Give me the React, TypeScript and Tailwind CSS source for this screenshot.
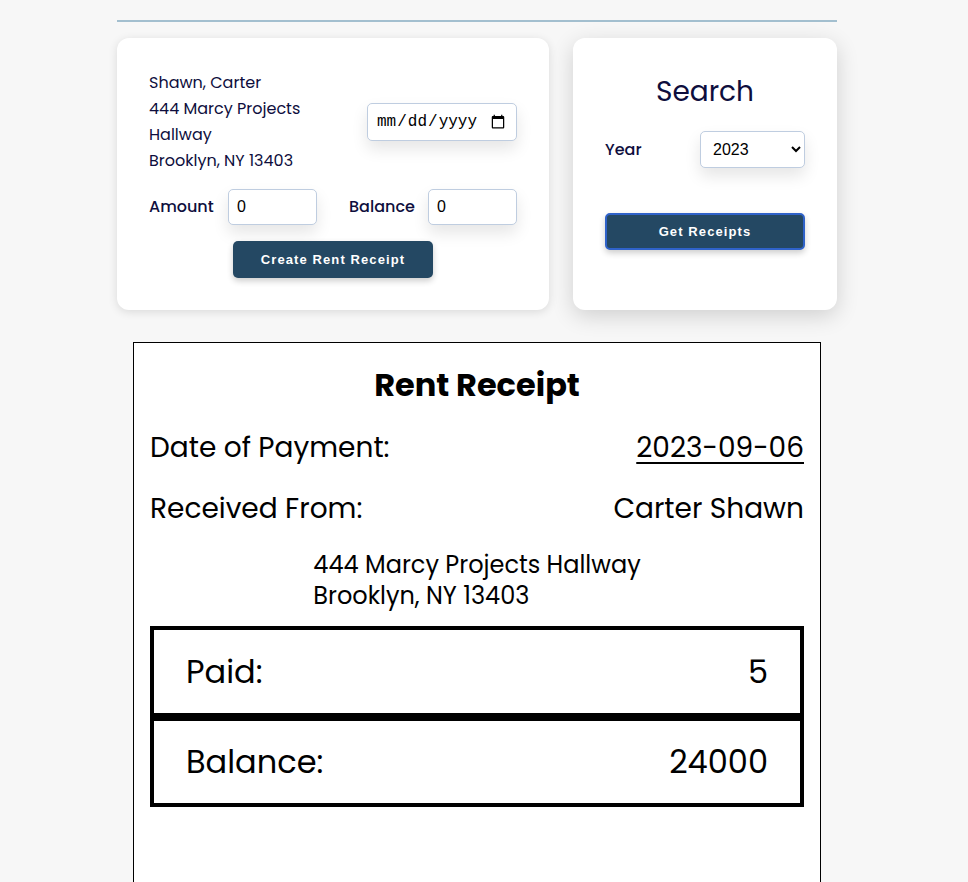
import React from "react";

const navy = "text-[#0e0e3d]";

export default function App() {
  return (
    <div className="min-h-[882px] bg-[#f7f7f7] font-['Poppins','Inter',sans-serif]">
      <div className="ml-[117px] w-[720px] pt-[20px]">
        <div className="h-[2px] bg-[#a3bfcf]" />
        <div className="mt-[16px] flex gap-6">
          <div className="w-[432px] rounded-xl bg-white p-8 shadow-[0_2px_10px_rgba(0,0,0,0.12)]">
            <div className="flex items-center justify-between">
              <div className={`text-[16px] leading-[26px] ${navy}`}>
                <div>Shawn, Carter</div>
                <div>444 Marcy Projects</div>
                <div>Hallway</div>
                <div>Brooklyn, NY 13403</div>
              </div>
              <input
                type="date"
                className="h-[38px] w-[150px] rounded-[5px] border border-[#bfcde0] bg-white px-2 font-['Liberation_Mono',monospace] text-[16px] text-black shadow-[0_8px_16px_rgba(0,0,0,0.1)]"
              />
            </div>
            <div className="mt-[15px] grid grid-cols-2 gap-8">
              <div className="flex items-center">
                <label className={`flex-1 text-[16px] font-medium ${navy}`}>Amount</label>
                <input
                  defaultValue="0"
                  className="h-[36px] w-[89px] rounded-[5px] border border-[#bfcde0] bg-white px-2 font-['Liberation_Sans',Arial,sans-serif] text-[16px] text-black shadow-[0_8px_16px_rgba(0,0,0,0.1)]"
                />
              </div>
              <div className="flex items-center">
                <label className={`flex-1 text-[16px] font-medium ${navy}`}>Balance</label>
                <input
                  defaultValue="0"
                  className="h-[36px] w-[89px] rounded-[5px] border border-[#bfcde0] bg-white px-2 font-['Liberation_Sans',Arial,sans-serif] text-[16px] text-black shadow-[0_8px_16px_rgba(0,0,0,0.1)]"
                />
              </div>
            </div>
            <div className="mt-4 flex justify-center">
              <button className="h-[37px] w-[200px] rounded-[5px] bg-[#244863] font-['Liberation_Sans',Arial,sans-serif] text-[13px] font-bold tracking-[1.1px] text-white shadow-[0_3px_6px_rgba(0,0,0,0.2)]">
                Create Rent Receipt
              </button>
            </div>
          </div>
          <div className="flex w-[264px] flex-col rounded-xl bg-white p-8 shadow-[0_6px_22px_rgba(0,0,0,0.16)]">
            <h2 className={`mt-[1px] text-center text-[28px] leading-[42px] ${navy}`}>Search</h2>
            <div className="mt-[18px] flex items-center justify-between">
              <label className={`text-[16px] font-medium ${navy}`}>Year</label>
              <select
                defaultValue="2023"
                className="h-[37px] w-[105px] rounded-[5px] border border-[#bfcde0] bg-white pl-2 font-['Liberation_Sans',Arial,sans-serif] text-[16px] text-black shadow-[0_8px_16px_rgba(0,0,0,0.1)]"
              >
                <option>2021</option>
                <option>2022</option>
                <option>2023</option>
                <option>2024</option>
              </select>
            </div>
            <button className="mt-[45px] h-[37px] w-[200px] rounded-[5px] border-2 border-[#2f62c9] bg-[#244863] font-['Liberation_Sans',Arial,sans-serif] text-[13px] font-bold tracking-[1.1px] text-white shadow-[0_3px_6px_rgba(0,0,0,0.2)]">
              Get Receipts
            </button>
          </div>
        </div>
        <div className="mx-4 mt-8 h-[560px] border border-black bg-white px-4 pt-4 text-black">
          <h1 className="text-center text-[32px] font-bold leading-[52px]">Rent Receipt</h1>
          <div className="mt-[6px] flex h-[61px] items-center justify-between text-[28px]">
            <span>Date of Payment:</span>
            <span className="underline underline-offset-[5px] decoration-[2px]">2023-09-06</span>
          </div>
          <div className="flex h-[61px] items-center justify-between text-[28px]">
            <span>Received From:</span>
            <span>Carter Shawn</span>
          </div>
          <div className="mt-[10px] flex justify-center">
            <div className="text-[24px] leading-[31px]">
              <div>444 Marcy Projects Hallway</div>
              <div>Brooklyn, NY 13403</div>
            </div>
          </div>
          <div className="mt-[15px] flex h-[91px] items-center justify-between border-4 border-black px-8 text-[32px]">
            <span>Paid:</span>
            <span>5</span>
          </div>
          <div className="flex h-[90px] items-center justify-between border-4 border-black px-8 text-[32px]">
            <span>Balance:</span>
            <span>24000</span>
          </div>
        </div>
      </div>
    </div>
  );
}
